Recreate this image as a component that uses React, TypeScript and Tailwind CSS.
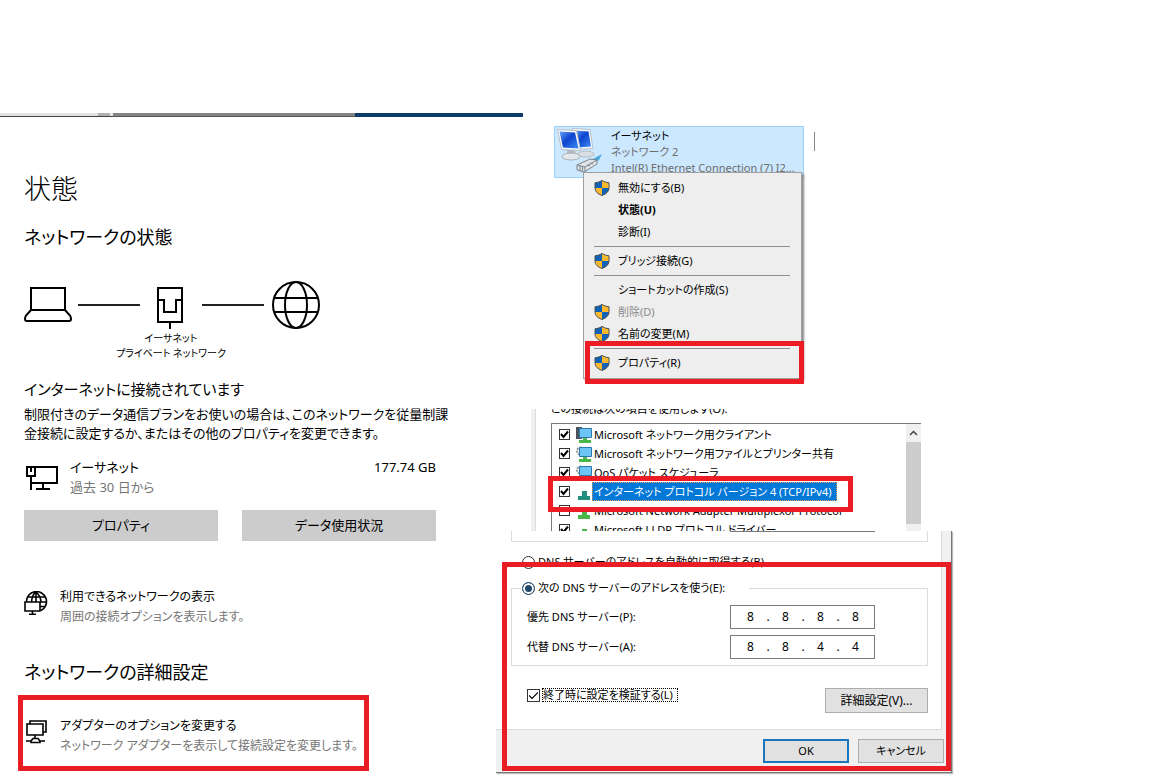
import { useState } from 'react';
import type { ReactNode } from 'react';

const protocols = [
  { name: 'Microsoft ネットワーク用クライアント', icon: 'client', checked: true },
  { name: 'Microsoft ネットワーク用ファイルとプリンター共有', icon: 'service', checked: true },
  { name: 'QoS パケット スケジューラ', icon: 'service', checked: true },
  { name: 'インターネット プロトコル バージョン 4 (TCP/IPv4)', icon: 'selected', checked: true },
  { name: 'Microsoft Network Adapter Multiplexor Protocol', icon: 'protocol', checked: false },
  { name: 'Microsoft LLDP プロトコル ドライバー', icon: 'protocol', checked: true },
];

function LaptopIcon() {
  return (
    <svg className="h-12 w-12" viewBox="0 0 48 48" fill="none" stroke="black" strokeWidth="2">
      <path d="M7 7h34v22H7zM7 29l-5 5.500Q1 36 1 38q0 2 2 2h42q2 0 2-2 0-2-1-3.500L41 29" />
    </svg>
  );
}

function PortIcon() {
  return (
    <svg className="h-12 w-[62px]" viewBox="0 0 62 48" fill="none" stroke="black" strokeWidth="2">
      <path d="M18 7h24v34H18zM18 19h6v12h12V19h6M30 41v7" />
    </svg>
  );
}

function GlobeIcon() {
  return (
    <svg className="h-12 w-12" viewBox="0 0 48 48" fill="none" stroke="black" strokeWidth="2">
      <circle cx="24" cy="24" r="23" />
      <ellipse cx="24" cy="24" rx="11" ry="23" />
      <path d="M2 17h44M2 31h44" />
    </svg>
  );
}

function EthernetIcon() {
  return (
    <svg className="h-[26px] w-[34px] shrink-0" viewBox="0 0 34 26" fill="none" stroke="black" strokeWidth="2">
      <path d="M1 2h8v9H1zM5 3v4M5 11v14M9 2h22v16H5M17 18v5M10 24h14" />
    </svg>
  );
}

function AvailableIcon() {
  return (
    <svg className="h-6 w-6 shrink-0" viewBox="0 0 24 24" fill="none" stroke="black" strokeWidth="1.600">
      <path d="M1 11h15v9H1zM8.500 20v3.500M5 23.300h7M2.500 11A10 10 0 1 1 17 19.500M4 6h17M16 11h7M16 15.500h6M7.500 11Q8 3.500 12 1.200 16.500 4.500 17 11M12 1v10" />
    </svg>
  );
}

function AdapterIcon() {
  return (
    <svg className="h-6 w-[22px] shrink-0" viewBox="0 0 22 24" fill="none" stroke="black" strokeWidth="1.600">
      <path d="M1 4h16v11H1zM4 4V1h16v11h-3M9 15v4M0 21h5M13 21h6M5 21l2-2.500h5l2 2.500v1.500H5z" />
    </svg>
  );
}

function Shield() {
  return (
    <svg className="h-4 w-4" viewBox="0 0 16 16">
      <path d="M8 .5Q11 2.500 15 2.800V8q0 5-7 7.500Q1 13 1 8V2.800Q5 2.500 8 .5z" fill="#fdb92c" />
      <path d="M8 .5V8H1V2.800Q5 2.500 8 .5zM8 8h7q0 5-7 7.500z" fill="#0f62b8" />
      <path d="M8 .5Q11 2.500 15 2.800V8q0 5-7 7.500Q1 13 1 8V2.800Q5 2.500 8 .5z" fill="none" stroke="#4a5157" />
    </svg>
  );
}

function ConnectionIcon() {
  return (
    <svg className="h-12 w-12 shrink-0" viewBox="0 0 48 48">
      <defs>
        <linearGradient id="screen" x1="0" y1="0" x2="1" y2="1">
          <stop offset="0" stopColor="#6aa5f5" />
          <stop offset="0.45" stopColor="#0d43cf" />
          <stop offset="1" stopColor="#3d8cf5" />
        </linearGradient>
      </defs>
      {/* Rear monitor */}
      <ellipse cx="29" cy="27" rx="8" ry="3" fill="#d9dee2" stroke="#b4bcc3" />
      <path d="M15 1.500l18 1 3 19-18 1z" fill="#f7f9fa" stroke="#b4c0ca" />
      <path d="M17 3.500l14.500 1 2.500 15-14 1z" fill="url(#screen)" />
      {/* Front monitor */}
      <path d="M10 23h8l1 6h-9z" fill="#b4bcc3" />
      <ellipse cx="14" cy="29.500" rx="9" ry="3.500" fill="#e4e8eb" stroke="#a5adb3" />
      <path d="M.5 2.500l19 1 4 20-19-1z" fill="#f7f9fa" stroke="#b4c0ca" />
      <path d="M2.500 4.500l15.500 1 3.500 16-15.500-1z" fill="url(#screen)" />
      {/* Cable plug */}
      <path d="M34 33l11-6-3 6-7 4z" fill="#49a9d9" />
      <path d="M20 38l13-6 7 1v4l-13 8-7-2z" fill="#dfe4e7" stroke="#7a858d" />
      <path d="M20 38l8 2 12-7M28 40v5M23 39v5M25.500 40v4M33 36l3 1M30 38l3 1" fill="none" stroke="#7a858d" />
    </svg>
  );
}

function ProtocolIcon({ kind }: { kind: string }) {
  if (kind === 'selected' || kind === 'protocol') {
    const fill = kind === 'selected' ? '#219080' : '#49b848';
    return (
      <svg className="h-4 w-4" viewBox="0 0 16 16" fill={fill}>
        <path d="M6 7h5v5H6zM2 12h12v4H2z" />
      </svg>
    );
  }
  return (
    <svg className="h-4 w-4" viewBox="0 0 16 16">
      {kind === 'client' ? (
        <path d="M0 0h6v12H0z" fill="#4b5258" />
      ) : (
        <circle cx="4.500" cy="5" r="3.500" fill="white" stroke="#8b969d" strokeWidth="2" strokeDasharray="2 1" />
      )}
      <path d="M3.500 1.500h12v9h-12z" fill="#6cc5f5" stroke="#2f78ad" />
      <path d="M7 11h4v2h4v3H3v-3h4z" fill="#49b848" />
    </svg>
  );
}

function Checkbox({ id, defaultChecked, large }: { id: string; defaultChecked: boolean; large?: boolean }) {
  const [checked, setChecked] = useState(defaultChecked);

  return (
    <span className="grid shrink-0 place-items-center">
      <input
        id={id}
        type="checkbox"
        checked={checked}
        onChange={(e) => setChecked(e.target.checked)}
        className={`
          col-start-1 row-start-1 appearance-none border border-[#333] bg-white
          ${large ? 'size-[13px]' : 'size-[11px]'}
        `}
      />
      {checked && (
        <svg
          className="pointer-events-none col-start-1 row-start-1 size-[9px]"
          viewBox="0 0 9 9"
          fill="none"
          stroke="black"
          strokeWidth={large ? 1.2 : 2}
        >
          <path d={large ? 'M0 4.500l3 3L9 1.500' : 'M1 4l2.500 3L8 1.500'} />
        </svg>
      )}
    </span>
  );
}

function MenuItem({ children, shield, className = '' }: { children: ReactNode; shield?: boolean; className?: string }) {
  return (
    <button type="button" role="menuitem" className={`flex h-[22px] w-full items-center gap-2 pl-[10px] text-left ${className}`}>
      <span className="w-4 shrink-0">{shield && <Shield />}</span>
      <span>{children}</span>
    </button>
  );
}

function MenuSeparator() {
  return <hr className="my-[3px] mr-[11px] ml-[10px] border-[#8f8f8f]" />;
}

function IpField({ id, octets }: { id: string; octets: string[] }) {
  return (
    <div className="flex h-6 w-[145px] items-center border border-[#7a7a7a] bg-white pl-1 text-xs">
      {octets.map((octet, i) => (
        <span key={i} className="flex items-center">
          <input
            id={i === 0 ? id : undefined}
            aria-label={i === 0 ? undefined : `${id} ${i + 1}`}
            defaultValue={octet}
            className="w-[31px] text-center outline-none"
          />
          {i < octets.length - 1 && <span className="w-1 text-center">.</span>}
        </span>
      ))}
    </div>
  );
}

function StatusPage() {
  return (
    <section className="w-full max-w-[496px]">
      {/* Edge of the window title bar */}
      <div className="flex h-1 w-[523px]">
        <div className="w-[98px] border-b border-[#444] bg-[#e2e2e2]" />
        <div className="w-3 border-b border-[#444] bg-[#b0b0b0]" />
        <div className="w-[3px] border-b border-[#444] bg-[#e8e8e8]" />
        <div className="flex-1 border-b border-[#555] bg-[#858585]" />
        <div className="w-[168px] bg-[#0b3d68]" />
      </div>

      <div className="pr-[60px] pl-6 text-[13px]">
        <h1 className="mt-[54px] text-[27px] leading-9 font-light">状態</h1>
        <h2 className="mt-4 text-lg leading-7">ネットワークの状態</h2>

        <div className="mt-[30px] flex items-center">
          <LaptopIcon />
          <div className="ml-[6px] h-[2px] w-[62px] bg-[#222]" />
          <PortIcon />
          <div className="mr-2 h-[2px] w-[62px] bg-[#222]" />
          <GlobeIcon />
        </div>
        <p className="mt-[2px] w-[294px] text-center text-[10px] leading-[15px]">
          イーサネット
          <br />
          プライベート ネットワーク
        </p>

        <h3 className="mt-4 text-[15px] leading-6">インターネットに接続されています</h3>
        <p className="mt-1 leading-[19px] whitespace-nowrap">
          制限付きのデータ通信プランをお使いの場合は、このネットワークを従量制課
          <br />
          金接続に設定するか、またはその他のプロパティを変更できます。
        </p>

        <div className="mt-[14px] flex items-start gap-[10px] pl-[2px] leading-5">
          <div className="pt-2">
            <EthernetIcon />
          </div>
          <div className="flex-1">
            <div>イーサネット</div>
            <div className="text-[#767676]">過去 30 日から</div>
          </div>
          <div>177.74 GB</div>
        </div>

        <div className="mt-[13px] grid grid-cols-2 gap-6">
          <button type="button" className="h-[31px] bg-[#ccc]">プロパティ</button>
          <button type="button" className="h-[31px] bg-[#ccc]">データ使用状況</button>
        </div>

        <a href="#available" className="mt-[46px] flex items-start gap-3 text-xs leading-5">
          <div className="pt-1">
            <AvailableIcon />
          </div>
          <div>
            <div>利用できるネットワークの表示</div>
            <div className="text-[#767676]">周囲の接続オプションを表示します。</div>
          </div>
        </a>

        <h2 className="mt-[31px] text-lg leading-7">ネットワークの詳細設定</h2>
        <a
          href="#adapter"
          className="mt-[9px] -ml-[6px] flex w-[351px] items-start gap-3 border-5 border-[#e91e25] pt-4 pb-[10px] pl-[3px] text-xs leading-5"
        >
          <div className="pt-1">
            <AdapterIcon />
          </div>
          <div>
            <div>アダプターのオプションを変更する</div>
            <div className="whitespace-nowrap text-[#767676]">
              ネットワーク アダプターを表示して接続設定を変更します。
            </div>
          </div>
        </a>
      </div>
    </section>
  );
}

function ConnectionMenu() {
  return (
    <section className="pt-[13px] pl-[58px]">
      <div className="flex items-start">
        <div className="flex h-[52px] w-[250px] gap-[6px] border border-[#99d1ff] bg-[#cce8ff] pl-[2px] leading-4">
          <ConnectionIcon />
          <div className="min-w-0 pt-px whitespace-nowrap">
            <div>イーサネット</div>
            <div className="text-[#6d6d6d]">ネットワーク 2</div>
            <div className="text-[#6d6d6d]">Intel(R) Ethernet Connection (7) I2...</div>
          </div>
        </div>
        <div className="mt-[6px] ml-[10px] h-[19px] w-px bg-[#888]" />
      </div>

      <div className="relative z-10 -mt-[6px] ml-[29px] w-[219px]">
        <div role="menu" className="border border-[#a0a0a0] bg-[#eee] pt-1 pb-1 shadow-[2px_2px_2px_#8a8a8a]">
          <MenuItem shield>無効にする(B)</MenuItem>
          <MenuItem className="font-bold">状態(U)</MenuItem>
          <MenuItem>診断(I)</MenuItem>
          <MenuSeparator />
          <MenuItem shield>ブリッジ接続(G)</MenuItem>
          <MenuSeparator />
          <MenuItem>ショートカットの作成(S)</MenuItem>
          <MenuItem shield className="text-[#8a8a8a]">削除(D)</MenuItem>
          <MenuItem shield>名前の変更(M)</MenuItem>
          <MenuSeparator />
          <MenuItem shield>プロパティ(R)</MenuItem>
        </div>
        <div className="pointer-events-none absolute -right-[2px] -bottom-[5px] left-[2px] h-[43px] border-5 border-[#ed1c24]" />
      </div>
    </section>
  );
}

function ProtocolList() {
  return (
    <section className="relative mt-[30px] ml-[35px] max-w-[390px]">
      <div className="flex h-[122px] overflow-hidden">
        <div className="w-[5px] shrink-0 border-r border-[#dcdcdc] bg-[#f0f0f0]" />
        <div className="min-w-0 flex-1 pl-[15px] whitespace-nowrap">
          <div className="-mt-2 leading-4">この接続は次の項目を使用します(O):</div>
          <div className="mt-[6px] flex border-t border-l border-[#7a7a7a]">
            <ul className="min-w-0 flex-1 overflow-hidden pt-px pl-[7px]">
              {protocols.map((p, i) => (
                <li key={p.name} className="flex h-[19px] items-center">
                  <Checkbox id={`protocol-${i}`} defaultChecked={p.checked} />
                  <span className="ml-[6px] w-4 shrink-0">
                    <ProtocolIcon kind={p.icon} />
                  </span>
                  <label
                    htmlFor={`protocol-${i}`}
                    className={
                      p.icon === 'selected'
                        ? 'border border-dotted border-[#e0a060] bg-[#0078d7] pr-1 pl-px leading-[17px] text-white'
                        : 'pl-[2px] leading-[19px]'
                    }
                  >
                    {p.name}
                  </label>
                </li>
              ))}
            </ul>
            <div className="w-[15px] shrink-0 bg-[#f0f0f0]">
              <button type="button" aria-label="上へスクロール" className="grid h-[18px] w-full place-items-center">
                <svg className="h-[6px] w-[9px]" viewBox="0 0 9 6" fill="none" stroke="#444" strokeWidth="1.500">
                  <path d="M1 5l3.500-3.500L8 5" />
                </svg>
              </button>
              <div className="h-[82px] bg-[#cdcdcd]" />
            </div>
          </div>
        </div>
      </div>
      <div className="pointer-events-none absolute top-[67px] left-[17px] h-9 w-[305px] border-5 border-[#ed1c24]" />
    </section>
  );
}

function RadioRow({ id, label, defaultChecked }: { id: string; label: string; defaultChecked?: boolean }) {
  return (
    <span className="flex items-center gap-[3px] leading-4">
      <input
        id={id}
        type="radio"
        name="dns"
        defaultChecked={defaultChecked}
        className="size-[13px] appearance-none rounded-full border border-[#333] bg-white checked:border-[#24486b] checked:bg-[#24486b] checked:shadow-[inset_0_0_0_2px_white]"
      />
      <label htmlFor={id}>{label}</label>
    </span>
  );
}

function DnsDialog() {
  return (
    <section className="relative max-w-[456px] border-r border-b border-[#777] bg-[#f0f0f0] shadow-[1px_1px_1px_#bbb]">
      <div className="mr-[9px] border-r border-b border-[#dcdcdc] bg-white pr-[13px] pb-4 pl-[15px]">
        <div className="h-[11px] border-x border-b border-[#dcdcdc]">
          <div className="mr-[52px] ml-auto h-px w-[145px] bg-[#7a7a7a]" />
        </div>

        <div className="mt-3 pl-[11px]">
          <RadioRow id="dns-auto" label="DNS サーバーのアドレスを自動的に取得する(B)" />
        </div>

        <fieldset className="mt-[10px] border border-[#dcdcdc] pr-[52px] pb-[6px] pl-[15px]">
          <legend className="-ml-[6px] w-[228px] pl-px">
            <RadioRow id="dns-manual" label="次の DNS サーバーのアドレスを使う(E):" defaultChecked />
          </legend>
          <div className="flex flex-col gap-[6px] pt-[9px]">
            <div className="flex items-center justify-between">
              <label htmlFor="dns-preferred">優先 DNS サーバー(P):</label>
              <IpField id="dns-preferred" octets={['8', '8', '8', '8']} />
            </div>
            <div className="flex items-center justify-between">
              <label htmlFor="dns-alternate">代替 DNS サーバー(A):</label>
              <IpField id="dns-alternate" octets={['8', '8', '4', '4']} />
            </div>
          </div>
        </fieldset>

        <div className="mt-[22px] flex items-start justify-between pl-4">
          <div className="flex items-center gap-[2px]">
            <Checkbox id="validate" defaultChecked large />
            <label htmlFor="validate" className="border border-dotted border-black pr-1 leading-3">
              終了時に設定を検証する(L)
            </label>
          </div>
          <button type="button" className="h-[25px] w-[103px] border border-[#adadad] bg-[#e1e1e1] text-xs">
            詳細設定(V)...
          </button>
        </div>
      </div>

      <div className="flex justify-end gap-[9px] pt-[9px] pr-[7px] pb-[9px]">
        <button type="button" className="h-6 w-[86px] border-2 border-[#1a76bc] bg-[#e1e1e1]">OK</button>
        <button type="button" className="h-6 w-[86px] border border-[#adadad] bg-[#e1e1e1]">キャンセル</button>
      </div>
      <div className="pointer-events-none absolute top-[31px] right-0 bottom-[1px] left-[6px] border-5 border-[#e91e25]" />
    </section>
  );
}

export default function App() {
  return (
    <main className="flex min-h-screen items-start bg-white pt-[113px] font-['Noto_Sans','Noto_Sans_CJK_JP',sans-serif] text-black [font-feature-settings:'palt']">
      <StatusPage />
      <div className="min-w-0 flex-1 text-[11px]">
        <ConnectionMenu />
        <ProtocolList />
        <DnsDialog />
      </div>
    </main>
  );
}
